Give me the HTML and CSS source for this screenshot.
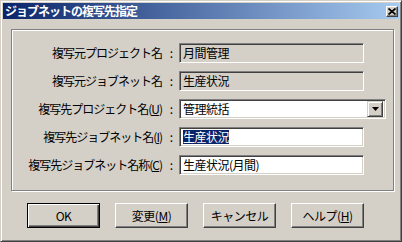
FILE: index.html
```html
<!DOCTYPE html>
<html lang="ja">
<head>
<meta charset="utf-8">
<title>ジョブネットの複写先指定</title>
<link rel="stylesheet" href="styles.css">
</head>
<body>
<div class="window">
  <div class="titlebar">
    <span class="title">ジョブネットの複写先指定</span>
    <span class="close"><svg width="8" height="7" viewBox="0 0 8 7"><path d="M0.5 0.5L7.5 6.5M7.5 0.5L0.5 6.5" stroke="#000" stroke-width="1.7" fill="none"/></svg></span>
  </div>
  <div class="client">
    <div class="group">
      <div class="label">複写元プロジェクト名</div><div class="colon">:</div><div class="field ro">月間管理</div>
      <div class="label">複写元ジョブネット名</div><div class="colon">:</div><div class="field ro">生産状況</div>
      <div class="label">複写先プロジェクト名(<u>U</u>)</div><div class="colon">:</div>
      <div class="combo"><span class="combo-text">管理統括</span><span class="drop"><svg width="7" height="4" viewBox="0 0 7 4"><path d="M0 0H7L3.5 4z" fill="#000"/></svg></span></div>
      <div class="label">複写先ジョブネット名(<u>I</u>)</div><div class="colon">:</div><div class="field"><span class="sel">生産状況</span></div>
      <div class="label">複写先ジョブネット名称(<u>C</u>)</div><div class="colon">:</div><div class="field">生産状況(月間)</div>
    </div>
    <div class="buttons">
      <div class="btn default">OK</div>
      <div class="btn">変更(<u>M</u>)</div>
      <div class="btn">キャンセル</div>
      <div class="btn">ヘルプ(<u>H</u>)</div>
    </div>
  </div>
</div>
</body>
</html>
```

FILE: styles.css
```css
html, body {
  margin: 0;
  padding: 0;
  background: #d4d0c8;
}
body {
  font-family: "Noto Sans CJK JP", "Liberation Sans", sans-serif;
  font-size: 12px;
  color: #000;
}
.window {
  width: 402px;
  height: 242px;
  box-sizing: border-box;
  border: 1px solid;
  border-color: #d4d0c8 #404040 #404040 #d4d0c8;
  box-shadow: inset 1px 1px #fff, inset -1px -1px #808080;
  padding: 2px;
  background: #d4d0c8;
}
.titlebar {
  height: 16px;
  display: flex;
  align-items: center;
  justify-content: space-between;
  padding: 0 1px 0 2px;
  background: linear-gradient(to right, #0a246a, #a6caf0);
}
.title {
  color: #fff;
  font-weight: bold;
  font-size: 12px;
  letter-spacing: -1px;
  line-height: 16px;
}
.close {
  width: 12px;
  height: 11px;
  box-sizing: border-box;
  background: #d4d0c8;
  border: 1px solid;
  border-color: #fff #404040 #404040 #fff;
  box-shadow: inset -1px -1px #808080;
  display: flex;
  align-items: center;
  justify-content: center;
}
.close svg { display: block; }
.client {
  padding: 10px 0 0 8px;
}
.group {
  width: 383px;
  height: 162px;
  box-sizing: border-box;
  border: 1px solid #808080;
  box-shadow: inset 1px 1px #fff, 1px 1px #fff;
  padding-top: 13px;
  display: grid;
  grid-template-columns: 152px 15px auto;
  grid-auto-rows: 20px;
  row-gap: 8px;
  align-items: center;
}
.label {
  text-align: right;
  padding-right: 2px;
  white-space: nowrap;
  line-height: 20px;
  letter-spacing: -1px;
}
.colon {
  text-align: center;
  line-height: 20px;
}
.field {
  width: 185px;
  height: 20px;
  box-sizing: border-box;
  border: 1px solid;
  border-color: #808080 #fff #fff #808080;
  box-shadow: inset 1px 1px #404040, inset -1px -1px #d4d0c8;
  background: #fff;
  padding: 1px 3px;
  line-height: 16px;
  white-space: nowrap;
  letter-spacing: -0.5px;
}
.field.ro {
  background: #d4d0c8;
}
.sel {
  background: #0a246a;
  color: #fff;
  display: inline-block;
  line-height: 14px;
  vertical-align: top;
  margin-top: 1px;
}
.combo {
  width: 207px;
  height: 20px;
  box-sizing: border-box;
  border: 1px solid;
  border-color: #808080 #fff #fff #808080;
  box-shadow: inset 1px 1px #404040, inset -1px -1px #d4d0c8;
  background: #fff;
  padding: 1px 2px 1px 3px;
  display: flex;
  align-items: center;
  justify-content: space-between;
  letter-spacing: -0.5px;
}
.combo-text {
  line-height: 16px;
}
.drop {
  width: 16px;
  height: 16px;
  box-sizing: border-box;
  background: #d4d0c8;
  border: 1px solid;
  border-color: #d4d0c8 #404040 #404040 #d4d0c8;
  box-shadow: inset 1px 1px #fff, inset -1px -1px #808080;
  display: flex;
  align-items: center;
  justify-content: center;
}
.drop svg { display: block; }
.buttons {
  display: flex;
  gap: 15px;
  margin-top: 12px;
  padding-left: 16px;
}
.btn {
  width: 73px;
  height: 25px;
  box-sizing: border-box;
  border: 1px solid;
  border-color: #fff #404040 #404040 #fff;
  box-shadow: inset -1px -1px #808080;
  display: flex;
  align-items: center;
  justify-content: center;
  line-height: 16px;
  white-space: nowrap;
  letter-spacing: -0.5px;
}
.btn.default {
  border-color: #000;
  box-shadow: inset 1px 1px #fff, inset -1px -1px #404040, inset -2px -2px #808080;
}
u {
  text-decoration: underline;
  text-underline-offset: 1px;
}
```
